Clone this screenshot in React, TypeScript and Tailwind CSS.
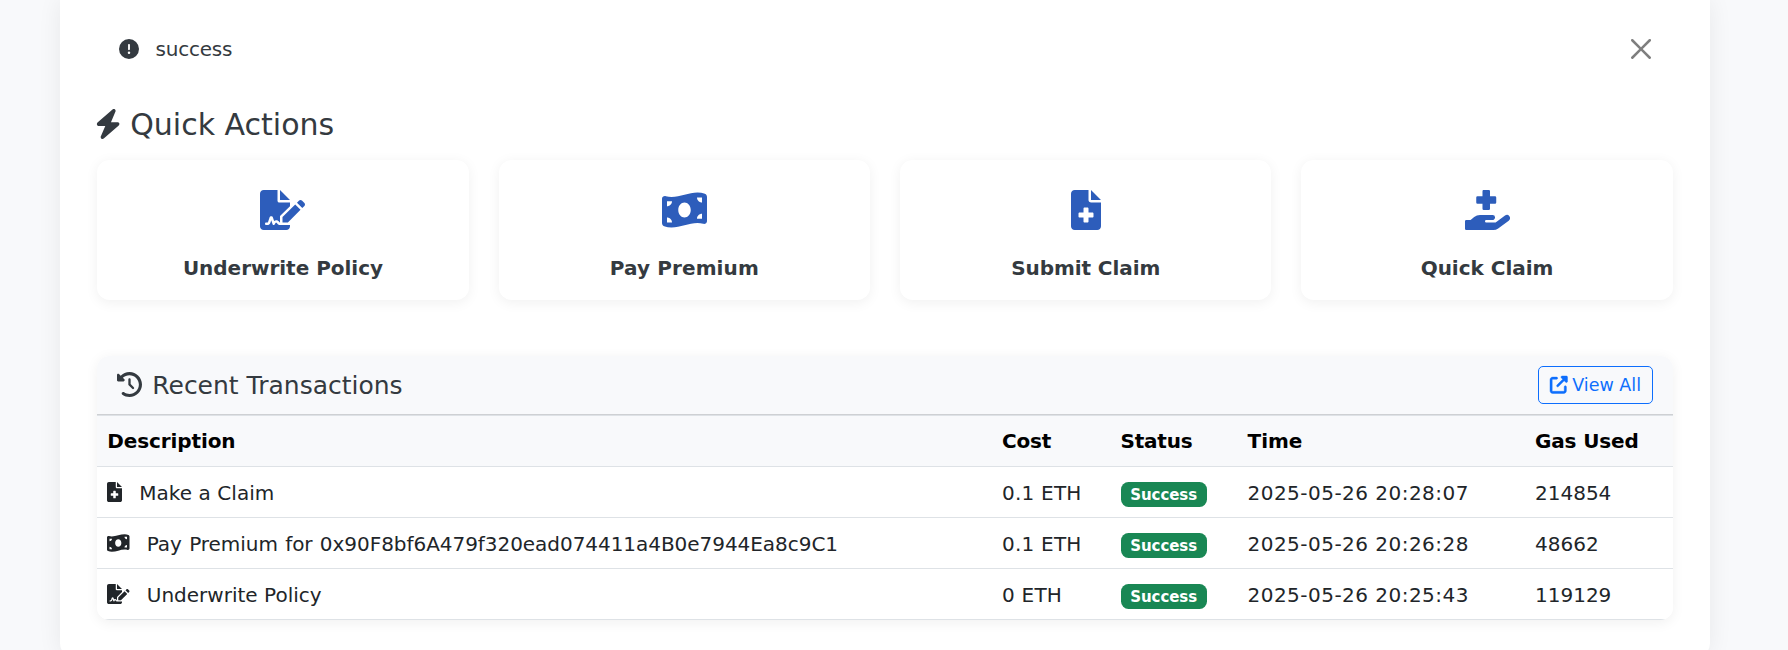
import type { ReactNode } from "react";
import {
  FaBolt,
  FaCircleExclamation,
  FaClockRotateLeft,
  FaMoneyBillWave,
  FaUpRightFromSquare,
} from "react-icons/fa6";
import { FaHandHoldingMedical } from "react-icons/fa";

type IconProps = { className?: string };

function FileMedicalIcon({ className }: IconProps) {
  return (
    <svg viewBox="0 0 384 512" fill="currentColor" className={className}>
      <path d="M256 0v128h128L256 0zM224 128L224 0H48C21.49 0 0 21.49 0 48v416C0 490.5 21.49 512 48 512h288c26.51 0 48-21.49 48-48V160h-127.1C238.3 160 224 145.7 224 128zM288 301.7v36.57C288 345.9 281.9 352 274.3 352H224v50.3C224 409.9 217.9 416 210.3 416H173.7C166.1 416 160 409.9 160 402.3V352h-50.3C102.1 352 96 345.9 96 338.3V301.7C96 294.1 102.1 288 109.7 288H160V237.7C160 230.1 166.1 224 173.7 224h36.57C217.9 224 224 230.1 224 237.7V288h50.29C281.9 288 288 294.1 288 301.7z" />
    </svg>
  );
}

function FileSignatureIcon({ className }: IconProps) {
  return (
    <svg viewBox="0 0 576 512" fill="currentColor" className={className}>
      <path d="M218.17 424.14c-2.95-5.92-8.09-6.52-10.17-6.52s-7.22.59-10.02 6.19l-7.67 15.34c-6.37 12.78-25.03 11.37-29.48-2.09L144 386.59l-10.61 31.88c-5.89 17.66-22.38 29.53-41 29.53H80c-8.84 0-16-7.16-16-16s7.16-16 16-16h12.39c4.83 0 9.11-3.08 10.64-7.66l18.19-54.64c3.3-9.81 12.44-16.41 22.78-16.41s19.48 6.59 22.77 16.41l13.88 41.64c19.75-16.19 54.06-9.7 66 14.16 1.89 3.78 5.49 5.95 9.36 6.26v-82.12l128-127.09V160H248c-13.2 0-24-10.8-24-24V0H48C21.5 0 0 21.5 0 48v416c0 26.5 21.5 48 48 48h288c26.5 0 48-21.5 48-48v-16l-128-.11c-16.12-.31-30.58-9.28-37.83-23.75zM384 128L256 0v128h128zm-96 218.96V416h68.99l161.68-162.78-67.88-67.88L288 346.96zm280.54-179.63l-31.87-31.87c-9.94-9.94-26.07-9.94-36.01 0l-27.25 27.25 67.88 67.88 27.25-27.25c9.95-9.94 9.95-26.07 0-36.01z" />
    </svg>
  );
}

const actions: { label: string; icon: ReactNode; tracking: string }[] = [
  { label: "Underwrite Policy", icon: <FileSignatureIcon className="h-10 w-[45px]" />, tracking: "tracking-[-0.023px]" },
  { label: "Pay Premium", icon: <FaMoneyBillWave className="h-10 w-[45px]" />, tracking: "tracking-[0.116px]" },
  { label: "Submit Claim", icon: <FileMedicalIcon className="h-10 w-[30px]" />, tracking: "tracking-[-0.072px]" },
  { label: "Quick Claim", icon: <FaHandHoldingMedical className="h-10 w-[45px]" />, tracking: "tracking-[-0.014px]" },
];

const columns = [
  { label: "Description", tracking: "tracking-[-0.107px]" },
  { label: "Cost", tracking: "tracking-[-0.176px]" },
  { label: "Status", tracking: "tracking-[-0.217px]" },
  { label: "Time", tracking: "tracking-normal" },
  { label: "Gas Used", tracking: "tracking-[-0.146px]" },
];

const transactions = [
  {
    icon: <FileMedicalIcon className="h-5 w-[15px]" />,
    description: "Make a Claim",
    tracking: "tracking-[0.056px]",
    cost: "0.1 ETH",
    time: "2025-05-26 20:28:07",
    gas: "214854",
  },
  {
    icon: <FaMoneyBillWave className="h-5 w-[22.5px]" />,
    description: "Pay Premium for 0x90F8bf6A479f320ead074411a4B0e7944Ea8c9C1",
    tracking: "tracking-[-0.045px] [word-spacing:1px]",
    cost: "0.1 ETH",
    time: "2025-05-26 20:26:28",
    gas: "48662",
  },
  {
    icon: <FileSignatureIcon className="h-5 w-[22.5px]" />,
    description: "Underwrite Policy",
    tracking: "tracking-[0.009px]",
    cost: "0 ETH",
    time: "2025-05-26 20:25:43",
    gas: "119129",
  },
];

const rowGrid = "grid grid-cols-[894.75px_118.5px_127px_287.5px_1fr] *:px-2.5";

export default function App() {
  return (
    <div className="h-[650px] overflow-hidden bg-[#f8f9fb] px-[60px] pr-[78px] font-['DejaVu_Sans',Verdana,sans-serif] text-xl leading-[30px] text-[#212529]">
      <main className="h-[658px] w-[1650px] rounded-b-[15px] bg-white px-[37.25px] shadow-[0_0_25px_rgba(0,0,0,0.07)]">
        <div className="flex h-[98px] items-center pr-[21.5px] pl-[21.25px] text-[#343a40]">
          <FaCircleExclamation className="size-5" />
          <span className="ml-[17px] tracking-[-0.222px]">success</span>
          <button aria-label="Close" className="ml-auto text-black opacity-50">
            <svg viewBox="0 0 16 16" fill="currentColor" className="size-5">
              <path d="M.293.293a1 1 0 0 1 1.414 0L8 6.586 14.293.293a1 1 0 1 1 1.414 1.414L9.414 8l6.293 6.293a1 1 0 0 1-1.414 1.414L8 9.414l-6.293 6.293a1 1 0 0 1-1.414-1.414L6.586 8 .293 1.707a1 1 0 0 1 0-1.414z" />
            </svg>
          </button>
        </div>

        <h2 className="flex h-[62px] items-start pt-[7px] text-[30px] leading-9 text-[#343a40]">
          <FaBolt className="-mx-[1.9px] mt-[3.5px] h-[30px] w-[26.25px]" />
          <span className="ml-[10.5px] pt-[1.5px]">Quick Actions</span>
        </h2>

        <section className="grid grid-cols-4 gap-[30px]">
          {actions.map((a) => (
            <div
              key={a.label}
              className="flex h-[140px] flex-col items-center rounded-[12.5px] bg-white pt-[30px] shadow-[0_2.5px_12.5px_rgba(0,0,0,0.06)]"
            >
              <span className="text-[#2d5dbb]">{a.icon}</span>
              <span className={`mt-[23px] font-bold text-[#343a40] ${a.tracking}`}>{a.label}</span>
            </div>
          ))}
        </section>

        <section className="mt-[55.5px] overflow-hidden rounded-[12.5px] shadow-[0_2.5px_12.5px_rgba(0,0,0,0.06)]">
          <header className="flex h-[59.5px] items-center justify-between border-b border-[#ced0d3] bg-[#f8f9fb] px-5">
            <h3 className="flex items-center text-[25px] text-[#343a40]">
              <FaClockRotateLeft className="size-[25px]" />
              <span className="ml-[10px] pt-[3px]">Recent Transactions</span>
            </h3>
            <button className="flex h-[38.5px] w-[114.5px] items-center rounded-[5px] border border-[#0d6efd] pl-[10.5px] text-[17.5px] text-[#0d6efd]">
              <FaUpRightFromSquare className="size-[17.5px] overflow-visible stroke-current [stroke-width:12px]" />
              <span className="ml-[5px] pt-px whitespace-nowrap">View All</span>
            </button>
          </header>

          <div className={`${rowGrid} h-[52px] border-y border-[#dee2e6] bg-[#f8f9fb] pt-[10px] font-bold text-black`}>
            {columns.map((c) => (
              <span key={c.label} className={c.tracking}>
                {c.label}
              </span>
            ))}
          </div>

          {transactions.map((t) => (
            <div key={t.gas} className={`${rowGrid} h-[51px] border-b border-[#dee2e6] bg-white pt-[11px]`}>
              <span className="flex items-start">
                <span className="mt-[4px]">{t.icon}</span>
                <span className={`ml-[17px] ${t.tracking}`}>{t.description}</span>
              </span>
              <span className="tracking-[0.22px]">{t.cost}</span>
              <span>
                <span className="mt-[4px] flex h-[25px] w-[86.3px] items-center justify-center rounded-[7.5px] bg-[#198754] text-[15px] font-bold tracking-[-0.082px] text-white">
                  Success
                </span>
              </span>
              <span className="tracking-[0.473px]">{t.time}</span>
              <span>{t.gas}</span>
            </div>
          ))}
        </section>
      </main>
    </div>
  );
}
